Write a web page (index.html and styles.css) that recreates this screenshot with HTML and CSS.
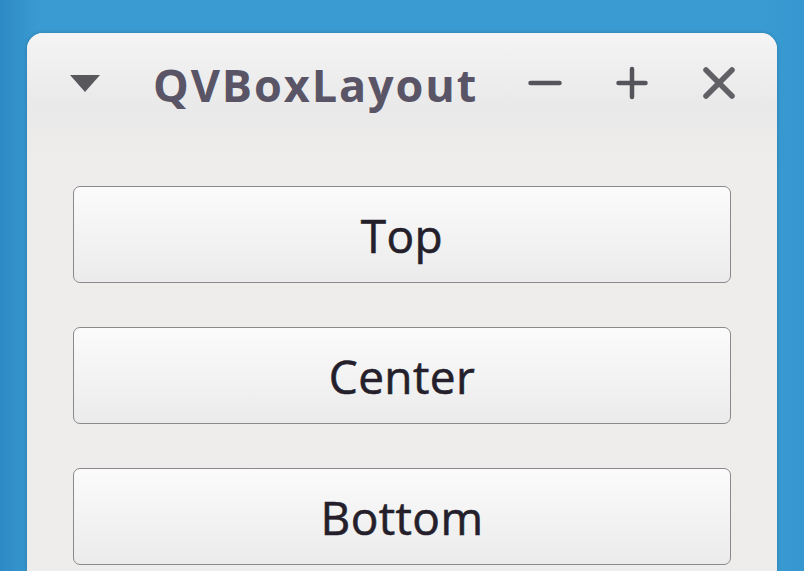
FILE: index.html
```html
<!DOCTYPE html>
<html>
<head>
<meta charset="utf-8">
<link rel="stylesheet" href="styles.css">
</head>
<body>
<div class="window">
  <div class="titlebar">
    <svg class="menu" width="32" height="20" viewBox="0 0 32 20"><polygon points="1,2 31,2 16,19" fill="#58575c"/></svg>
    <div class="title">QVBoxLayout</div>
    <div class="controls">
      <svg class="ctl" width="34" height="34" viewBox="0 0 34 34"><line x1="2.5" y1="17" x2="31.5" y2="17" stroke="#55545a" stroke-width="4.5" stroke-linecap="round"/></svg>
      <svg class="ctl" width="32" height="34" viewBox="0 0 32 34"><line x1="2.5" y1="17" x2="29.5" y2="17" stroke="#55545a" stroke-width="4.5" stroke-linecap="round"/><line x1="16" y1="3" x2="16" y2="31" stroke="#55545a" stroke-width="4.5" stroke-linecap="round"/></svg>
      <svg class="ctl" width="34" height="34" viewBox="0 0 34 34"><line x1="4" y1="4" x2="30" y2="30" stroke="#606065" stroke-width="5.5" stroke-linecap="round"/><line x1="30" y1="4" x2="4" y2="30" stroke="#606065" stroke-width="5.5" stroke-linecap="round"/></svg>
    </div>
  </div>
  <div class="content">
    <button class="btn">Top</button>
    <button class="btn">Center</button>
    <button class="btn">Bottom</button>
  </div>
</div>
</body>
</html>
```
FILE: styles.css
```css
html, body {
  margin: 0;
  padding: 0;
  height: 100%;
  overflow: hidden;
}
body {
  background: linear-gradient(to right, #2f8ac4 0px, #3a9bd2 40px, #3a9bd2 760px, #3597cf 100%);
  font-family: "Open Sans", "Noto Sans", sans-serif;
}
.window {
  margin: 33px 0 0 27px;
  width: 750px;
  height: 538px;
  background: #efedeb;
  border-radius: 16px 16px 0 0;
  box-shadow: 0 0 4px rgba(0,0,0,0.2);
}
.titlebar {
  height: 100px;
  display: flex;
  align-items: center;
  padding: 0 41px 0 42px;
  border-radius: 16px 16px 0 0;
  background: linear-gradient(to bottom, #f4f4f4 0%, #e9e9ea 75%, #ecebea 100%);
}
.menu {
  flex: none;
}
.title {
  margin-left: 52px;
  font-weight: 700;
  font-size: 45px;
  color: #5a5566;
  letter-spacing: 1.9px;
  margin-top: 2px;
}
.controls {
  margin-left: auto;
  display: flex;
  gap: 54px;
  align-items: center;
}
.ctl {
  display: block;
}
.content {
  display: flex;
  flex-direction: column;
  gap: 44px;
  padding: 53px 46px 0 46px;
  background: linear-gradient(to bottom, #ecebea, #efedeb 40px);
}
.btn {
  height: 97px;
  width: 100%;
  border: 1.5px solid #8a898c;
  border-radius: 7px;
  background: linear-gradient(to bottom, #fbfbfc, #ebebeb);
  font-family: "Open Sans", "Noto Sans", sans-serif;
  font-size: 46px;
  letter-spacing: 0.4px;
  -webkit-text-stroke: 0.6px #251f2c;
  color: #251f2c;
  padding: 0;
}
```
